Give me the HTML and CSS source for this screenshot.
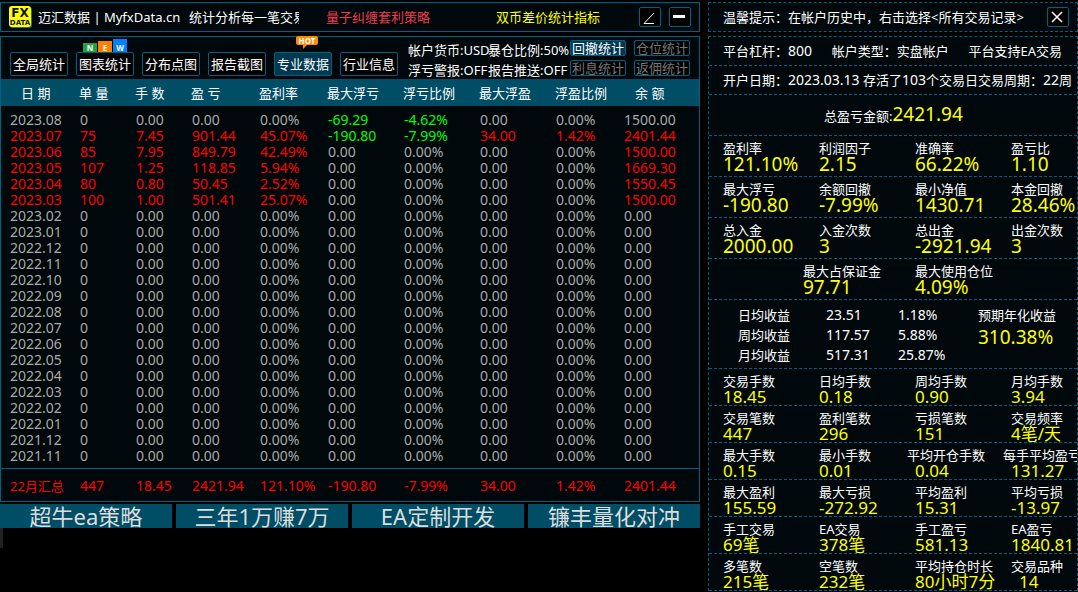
FILE: index.html
```html
<!DOCTYPE html>
<html lang="zh-CN">
<head>
  <meta charset="UTF-8" />
  <meta name="viewport" content="width=device-width, initial-scale=1.0"/>
  <title>迈汇数据 | MyfxData.cn</title>
  <link rel="stylesheet" href="styles.css">
</head>
<body>
  <div class="container">
    <main class="left">
      <header class="topbar">
        <svg class="logo" viewBox="0 0 24 22" aria-hidden="true">
          <rect x="1" y="1" width="22" height="21" rx="3" fill="#2b6a80"/>
          <rect x="0" y="0" width="22" height="21" rx="3" fill="#ffff00"/>
          <text x="11" y="11" class="logo-fx">FX</text>
          <text x="11" y="19" class="logo-data">DATA</text>
        </svg>
        <div class="brand">迈汇数据 | MyfxData.cn</div>
        <div class="slogan">统计分析每一笔交易</div>
        <a class="link-red" href="#">量子纠缠套利策略</a>
        <a class="link-yellow" href="#">双币差价统计指标</a>
        <div class="window-buttons">
          <button class="icon-btn" aria-label="还原">
            <svg viewBox="0 0 20 18"><path d="M14 5L4 15.5H14" fill="none" stroke="#fff" stroke-width="1"/></svg>
          </button>
          <button class="icon-btn" aria-label="最小化">
            <svg viewBox="0 0 20 18"><path d="M3 8.5H15" stroke="#fff" stroke-width="3"/></svg>
          </button>
        </div>
      </header>

      <section class="panel">
        <div class="toolbar">
          <nav class="tabs">
            <button class="tab">全局统计</button>
            <button class="tab">图表统计
              <span class="badge-new"><i class="n">N</i><i class="e">E</i><i class="w">W</i></span>
            </button>
            <button class="tab">分布点图</button>
            <button class="tab">报告截图</button>
            <button class="tab active">专业数据
              <span class="badge-hot">HOT
                <svg viewBox="0 0 6 5"><path d="M1 0H6L1 5Z" fill="#ff8c00"/></svg>
              </span>
            </button>
            <button class="tab">行业信息</button>
          </nav>
          <div class="status">
            <span>帐户货币:USD</span><span>暴仓比例:50%</span>
            <span>浮亏警报:OFF</span><span>报告推送:OFF</span>
          </div>
          <div class="small-tabs">
            <button class="small-tab active">回撤统计</button>
            <button class="small-tab">仓位统计</button>
            <button class="small-tab">利息统计</button>
            <button class="small-tab">返佣统计</button>
          </div>
        </div>

        <table class="data">
          <colgroup>
            <col class="c-date"><col class="c-s"><col class="c-s"><col class="c-m"><col class="c-m">
            <col class="c-l"><col class="c-l"><col class="c-l"><col class="c-m"><col class="c-last">
          </colgroup>
          <thead>
            <tr>
              <th class="indent">日 期</th><th>单 量</th><th>手 数</th><th>盈 亏</th><th>盈利率</th>
              <th>最大浮亏</th><th>浮亏比例</th><th>最大浮盈</th><th>浮盈比例</th><th class="indent">余 额</th>
            </tr>
          </thead>
          <tbody id="rows"></tbody>
          <tfoot>
            <tr>
              <td><span class="cn">22月汇总</span></td><td>447</td><td>18.45</td><td>2421.94</td><td>121.10%</td>
              <td>-190.80</td><td>-7.99%</td><td>34.00</td><td>1.42%</td><td>2401.44</td>
            </tr>
          </tfoot>
        </table>
      </section>

      <div class="ads">
        <button class="ad">超牛ea策略</button>
        <button class="ad">三年1万赚7万</button>
        <button class="ad">EA定制开发</button>
        <button class="ad">镰丰量化对冲</button>
      </div>
      <div class="grip"></div>
    </main>

    <aside class="right">
      <div class="tip">
        <span>温馨提示：在帐户历史中，右击选择&lt;所有交易记录&gt;</span>
        <button class="icon-btn" aria-label="关闭">
          <svg viewBox="0 0 20 18"><path d="M4 4L14 14M14 4L4 14" stroke="#fff" stroke-width="1.5"/></svg>
        </button>
      </div>

      <div class="info">
        <div class="line account">
          <span>平台杠杆：<span class="en">800</span></span>
          <span>帐户类型：实盘帐户</span>
          <span>平台支持EA交易</span>
        </div>
        <div class="line">
          <span>开户日期：<span class="en">2023.03.13</span> 存活了<span class="en">103</span>个交易日交易周期：<span class="en">22</span>周</span>
        </div>
        <div class="total">总盈亏金额:<span class="big">2421.94</span></div>
        <div id="summary"></div>
        <div class="metrics pair">
          <div class="metric"><span class="label">最大占保证金</span><span class="value">97.71</span></div>
          <div class="metric"><span class="label">最大使用仓位</span><span class="value">4.09%</span></div>
        </div>
        <div class="average">
          <table class="avg">
            <tr><th>日均收益</th><td>23.51</td><td>1.18%</td></tr>
            <tr><th>周均收益</th><td>117.57</td><td>5.88%</td></tr>
            <tr><th>月均收益</th><td>517.31</td><td>25.87%</td></tr>
          </table>
          <div class="yearly">预期年化收益<span class="big">310.38%</span></div>
        </div>
        <div id="detail" class="detail"></div>
      </div>
    </aside>
  </div>

  <script src="script.js"></script>
</body>
</html>
```

FILE: styles.css
```css
* {
  box-sizing: border-box;
}
body {
  margin: 0;
  background-color: #000;
  color: #fff;
  font-family: "Noto Sans", "Noto Sans CJK SC", sans-serif;
  font-size: 13px;
  line-height: 16px;
  overflow: hidden;
}
button {
  font-family: inherit;
  font-size: 13px;
  line-height: 16px;
  color: #fff;
  padding: 0;
  border: 1px solid #006080;
  border-radius: 2px;
  background-color: #000;
  white-space: nowrap;
  cursor: pointer;
}
a {
  text-decoration: none;
}
.container {
  display: grid;
  grid-template-columns: 700fr 370fr;
  gap: 8px;
  padding-top: 2px;
}
.left, .right {
  min-width: 0;
}
.en {
  font-size: 14px;
}

/* title bar */
.topbar {
  display: flex;
  align-items: center;
  height: 30px;
  padding: 0 8px;
  border: 1px solid #006080;
  background-color: #00080b;
  white-space: nowrap;
}
.logo {
  width: 24px;
  height: 22px;
  margin-right: 5px;
  flex: none;
}
.logo-fx, .logo-data {
  font-family: "DejaVu Sans", sans-serif;
  font-weight: bold;
  text-anchor: middle;
  fill: #111;
}
.logo-fx {
  font-size: 12px;
}
.logo-data {
  font-size: 7px;
}
.brand {
  width: 151px;
}
.slogan {
  width: 110px;
  overflow: hidden;
}
.link-red {
  color: #f03c50;
  margin-left: 27px;
}
.link-yellow {
  color: #ff0;
  margin-left: 66px;
}
.window-buttons {
  display: flex;
  gap: 8px;
  margin-left: auto;
}
.icon-btn {
  width: 22px;
  height: 20px;
  flex: none;
}
.icon-btn svg {
  display: block;
  width: 20px;
  height: 18px;
}

/* tabs */
.panel {
  margin-top: 4px;
  border: 1px solid #006080;
  background-color: #00080b;
}
.toolbar {
  display: flex;
  height: 42px;
  padding: 3px 9px;
}
.tabs {
  display: flex;
  align-items: flex-end;
  gap: 8px;
}
.tab {
  position: relative;
  width: 58px;
  height: 24px;
}
.tab.active, .small-tab.active {
  background-color: #003850;
}
.badge-new {
  position: absolute;
  left: 6px;
  bottom: 23px;
  display: flex;
  align-items: flex-end;
  gap: 1px;
}
.badge-new i {
  width: 14px;
  font-size: 8px;
  line-height: 9px;
  font-style: normal;
  font-weight: bold;
}
.badge-new .n {
  background-color: #28a040;
}
.badge-new .e {
  background-color: #ff8000;
  padding-top: 2px;
}
.badge-new .w {
  background-color: #0080ff;
  padding-top: 4px;
}
.badge-hot {
  position: absolute;
  left: 21px;
  bottom: 30px;
  width: 22px;
  height: 9px;
  border-radius: 2px;
  background-color: #ff8c00;
  font-size: 8px;
  line-height: 9px;
  font-weight: bold;
}
.badge-hot svg {
  position: absolute;
  left: 6px;
  top: 8px;
  width: 6px;
  height: 5px;
}
.status {
  display: grid;
  grid-template-columns: 80px 82px;
  grid-auto-rows: 20px;
  align-items: center;
  margin-left: 10px;
  white-space: nowrap;
}
.small-tabs {
  display: grid;
  grid-template-columns: 56px 56px;
  gap: 4px 8px;
  flex: none;
  margin-left: auto;
}
.small-tab {
  height: 16px;
  line-height: 14px;
  color: #777;
}
.small-tab.active {
  color: #fff;
}

/* monthly table */
.data {
  width: 100%;
  table-layout: fixed;
  border-collapse: collapse;
  color: #aaa;
  font-size: 14px;
}
.c-date {
  width: 70px;
}
.c-s {
  width: 56px;
}
.c-m {
  width: 68px;
}
.c-l {
  width: 76px;
}
.c-last {
  width: 84px;
}
.data th {
  height: 27px;
  padding: 0 0 0 8px;
  background-color: #004d66;
  color: #fff;
  font-size: 13px;
  font-weight: normal;
  text-align: left;
  white-space: nowrap;
}
.data th.indent {
  padding-left: 20px;
}
.data td {
  height: 16px;
  padding: 0 0 0 9px;
  line-height: 16px;
  white-space: nowrap;
}
.data tbody tr:first-child td {
  height: 22px;
  padding-top: 6px;
}
.data .cn {
  font-size: 13px;
}
.data .red, .data tfoot {
  color: #f00;
}
.data .green {
  color: #0f0;
}
.data tbody tr:last-child td {
  height: 20px;
  padding-bottom: 4px;
}
.data tfoot td {
  height: 32px;
  padding-top: 2px;
  border-top: 1px solid #006080;
}

.ads {
  display: grid;
  grid-template-columns: repeat(4, 1fr);
  gap: 4px;
  margin-top: 2px;
}
.ad {
  height: 24px;
  border: none;
  border-radius: 0;
  background-color: #004d66;
  color: #ddd;
  font-size: 22px;
  line-height: 24px;
}
.grip {
  width: 3px;
  height: 20px;
  background-color: #222;
}

/* account statistics */
.tip {
  display: flex;
  align-items: center;
  justify-content: space-between;
  height: 30px;
  padding: 0 8px 0 14px;
  border: 1px dashed #006080;
  background-color: #00080b;
  white-space: nowrap;
}
.info {
  margin-top: 4px;
  border: 1px dashed #006080;
  border-bottom: none;
  background-color: #00080b;
  overflow: hidden;
}
.line, .total, .metrics, .average {
  border-bottom: 1px dashed #006080;
  white-space: nowrap;
}
.line {
  display: flex;
  align-items: center;
  height: 29px;
  padding-left: 14px;
}
.account {
  justify-content: space-between;
  padding-right: 15px;
}
.total {
  height: 41px;
  padding-left: 115px;
  line-height: 38px;
}
.big {
  color: #ff0;
  font-size: 19px;
}
.metrics {
  display: grid;
  grid-template-columns: 96fr 96fr 96fr 66fr;
  align-content: start;
  height: 41px;
  padding: 5px 0 0 14px;
}
.pair {
  grid-template-columns: 112fr 162fr;
  padding-left: 94px;
}
.detail .metrics {
  height: 37px;
}
.metric {
  min-width: 0;
}
.label, .value {
  display: block;
  line-height: 15px;
}
.value {
  color: #ff0;
  font-size: 19px;
  line-height: 16px;
}
.detail .value {
  font-size: 17px;
  line-height: 15px;
}
.label.out {
  margin-left: -8px;
}
.value.in {
  margin-left: 8px;
}
.average {
  display: flex;
  height: 69px;
  padding: 5px 0 0 29px;
}
.avg {
  width: 240px;
  height: 60px;
  border-collapse: collapse;
}
.avg th, .avg td {
  height: 20px;
  padding: 0;
  font-weight: normal;
  text-align: left;
}
.avg td {
  font-size: 14px;
}
.avg th {
  width: 88px;
}
.avg td:nth-child(2) {
  width: 72px;
}
.yearly {
  line-height: 20px;
}
.yearly .big {
  display: block;
  line-height: 24px;
}
```

FILE: script.js
```javascript
const months = [
  ['2023.08', '0', '0.00', '0.00', '0.00%', '-69.29', '-4.62%', '0.00', '0.00%', '1500.00'],
  ['2023.07', '75', '7.45', '901.44', '45.07%', '-190.80', '-7.99%', '34.00', '1.42%', '2401.44'],
  ['2023.06', '85', '7.95', '849.79', '42.49%', '0.00', '0.00%', '0.00', '0.00%', '1500.00'],
  ['2023.05', '107', '1.25', '118.85', '5.94%', '0.00', '0.00%', '0.00', '0.00%', '1669.30'],
  ['2023.04', '80', '0.80', '50.45', '2.52%', '0.00', '0.00%', '0.00', '0.00%', '1550.45'],
  ['2023.03', '100', '1.00', '501.41', '25.07%', '0.00', '0.00%', '0.00', '0.00%', '1500.00']
];

// months without trades
['2023.02', '2023.01', '2022.12', '2022.11', '2022.10', '2022.09', '2022.08', '2022.07',
 '2022.06', '2022.05', '2022.04', '2022.03', '2022.02', '2022.01', '2021.12', '2021.11'].forEach(m => {
  months.push([m, '0', '0.00', '0.00', '0.00%', '0.00', '0.00%', '0.00', '0.00%', '0.00']);
});

function cellClass(row, text, i) {
  if (text.startsWith('-')) return 'green';
  const traded = row[1] !== '0';
  if (traded && (i < 5 || i === 9 || parseFloat(text) > 0)) return 'red';
  return '';
}

document.getElementById('rows').innerHTML = months.map(row =>
  `<tr>${row.map((text, i) => `<td class="${cellClass(row, text, i)}">${text}</td>`).join('')}</tr>`
).join('');

const summary = [
  [['盈利率', '121.10%'], ['利润因子', '2.15'], ['准确率', '66.22%'], ['盈亏比', '1.10']],
  [['最大浮亏', '-190.80'], ['余额回撤', '-7.99%'], ['最小净值', '1430.71'], ['本金回撤', '28.46%']],
  [['总入金', '2000.00'], ['入金次数', '3'], ['总出金', '-2921.94'], ['出金次数', '3']]
];

const detail = [
  [['交易手数', '18.45'], ['日均手数', '0.18'], ['周均手数', '0.90'], ['月均手数', '3.94']],
  [['交易笔数', '447'], ['盈利笔数', '296'], ['亏损笔数', '151'], ['交易频率', '4笔/天']],
  [['最大手数', '0.15'], ['最小手数', '0.01'], ['平均开仓手数', '0.04', 'out'], ['每手平均盈亏', '131.27', 'out']],
  [['最大盈利', '155.59'], ['最大亏损', '-272.92'], ['平均盈利', '15.31'], ['平均亏损', '-13.97']],
  [['手工交易', '69笔'], ['EA交易', '378笔'], ['手工盈亏', '581.13'], ['EA盈亏', '1840.81']],
  [['多笔数', '215笔'], ['空笔数', '232笔'], ['平均持仓时长', '80小时7分'], ['交易品种', '14', 'in']]
];

function renderMetrics(id, rows) {
  document.getElementById(id).innerHTML = rows.map(row =>
    `<div class="metrics">${row.map(([label, value, cls = '']) =>
      `<div class="metric"><span class="label ${cls}">${label}</span><span class="value ${cls}">${value}</span></div>`
    ).join('')}</div>`
  ).join('');
}

renderMetrics('summary', summary);
renderMetrics('detail', detail);
```
